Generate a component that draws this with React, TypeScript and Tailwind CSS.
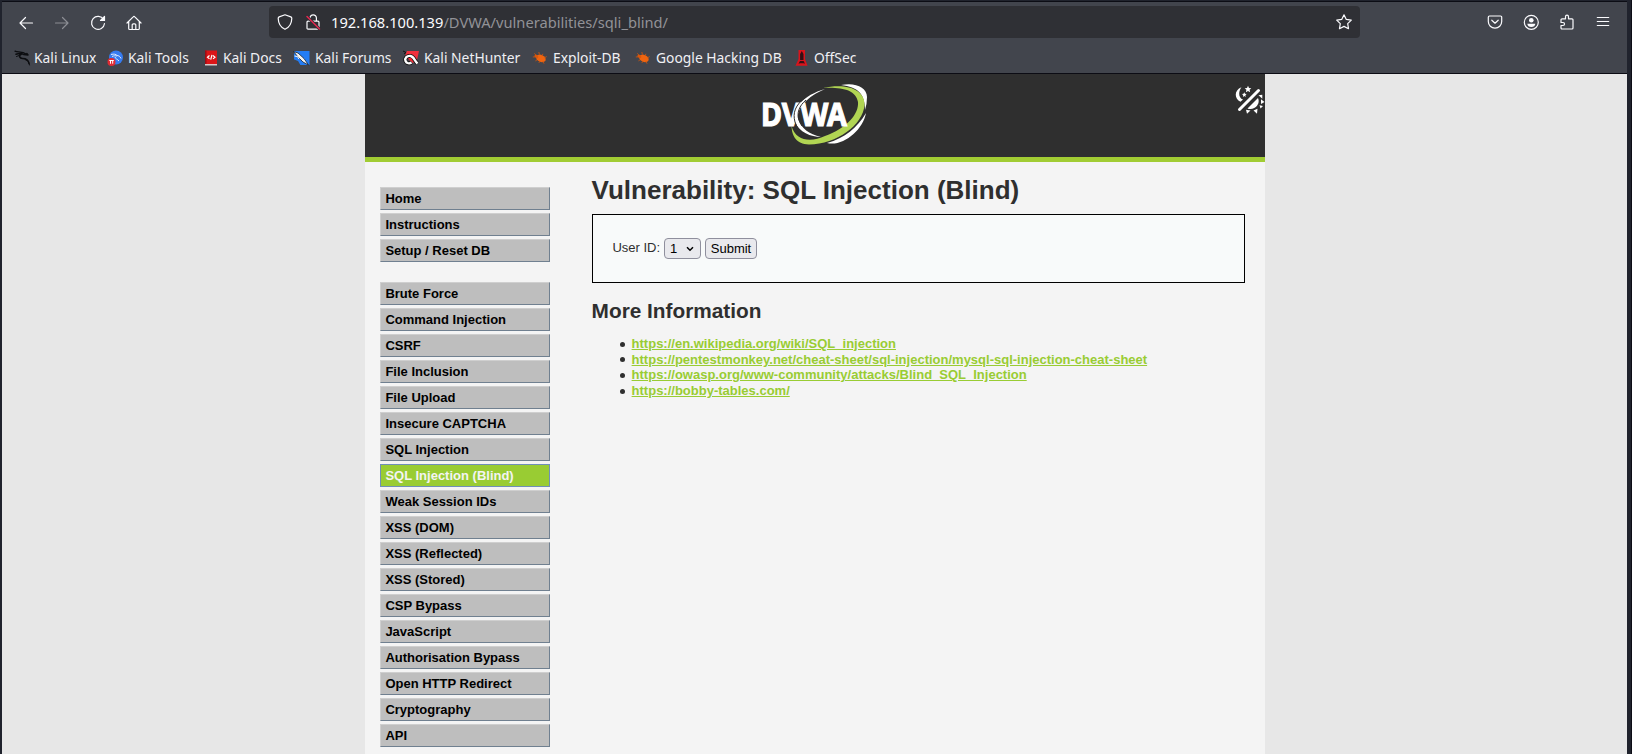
import React from "react";

const topMenu = ["Home", "Instructions", "Setup / Reset DB"];
const mainMenu = [
  "Brute Force", "Command Injection", "CSRF", "File Inclusion", "File Upload",
  "Insecure CAPTCHA", "SQL Injection", "SQL Injection (Blind)", "Weak Session IDs",
  "XSS (DOM)", "XSS (Reflected)", "XSS (Stored)", "CSP Bypass", "JavaScript",
  "Authorisation Bypass", "Open HTTP Redirect", "Cryptography", "API",
];
const links = [
  "https://en.wikipedia.org/wiki/SQL_injection",
  "https://pentestmonkey.net/cheat-sheet/sql-injection/mysql-sql-injection-cheat-sheet",
  "https://owasp.org/www-community/attacks/Blind_SQL_Injection",
  "https://bobby-tables.com/",
];

type P = { children: React.ReactNode; className?: string };
const Icon = ({ children, className = "" }: P) => (
  <svg width="16" height="16" viewBox="0 0 16 16" fill="none" stroke="#fbfbfe" strokeWidth="1.2" strokeLinecap="round" strokeLinejoin="round" className={"shrink-0 " + className}>
    {children}
  </svg>
);

const Bug = () => (
  <svg width="16" height="16" viewBox="0 0 16 16" className="shrink-0">
    <g transform="rotate(24 8 8)">
      <ellipse cx="9" cy="8" rx="5" ry="3.5" fill="#ee6410" />
      <ellipse cx="4" cy="8" rx="2" ry="1.6" fill="#d9570c" />
      <path d="M3 7 1 6M3 9 1 10M6 5 4.5 3M9 5V3M12 6 13.500 4M6 11 5 12.500M9 11v2M12 10l2 1.500" stroke="#c9540f" strokeWidth=".8" />
    </g>
  </svg>
);

const bookmarks: { label: string; width: string; icon: React.ReactNode }[] = [
  {
    label: "Kali Linux", width: "w-[94px]", icon: (
      <svg width="16" height="16" viewBox="0 0 16 16" className="shrink-0 overflow-visible" fill="none" stroke="#0c0d10" strokeLinecap="round" strokeLinejoin="round">
        <g transform="translate(1 0)">
          <path d="M1 1.200C4 2.500 8 1 12.500 4.200" strokeWidth="1.300" />
          <path d="M2 4.300C5 3.300 8 3.500 9.500 4.500L14 5l-1.200-1.500M7 4.500C4.500 5.500 5.500 8.500 8.500 8.500c4 0 6 1.500 6.500 5" strokeWidth="1.500" />
          <path d="M2.500 6.500 5 5.500M11 9.500l3.500 2 1 3.500" strokeWidth="1" />
        </g>
      </svg>
    ),
  },
  {
    label: "Kali Tools", width: "w-[95px]", icon: (
      <svg width="16" height="16" viewBox="0 0 16 16" className="shrink-0 overflow-visible">
        <circle cx="9" cy="7.500" r="7" fill="#367bf0" />
        <path d="M4 4.500c3-.8 5-.3 6 1 1.500.1 3 .6 4 3M5 6.500c2-.9 3.500-.9 5-.5M8 7c.3 2 2.500 2 4 4" stroke="#dce8ff" strokeWidth="1" fill="none" />
        <circle cx="4.500" cy="12" r="4" fill="#e02b33" />
        <path d="M2.300 10.500h4.500M3.500 10.700v3M5.700 10.700v3" stroke="#fff" strokeWidth="1" />
      </svg>
    ),
  },
  {
    label: "Kali Docs", width: "w-[92px]", icon: (
      <svg width="16" height="16" viewBox="0 0 16 16" className="shrink-0">
        <path d="M3 .5h12v13.500h-12z" fill="#dc1518" /><path d="M3 .5h1.500v13.500h-1.500z" fill="#9c0d15" />
        <path d="M3 14h12v1.500h-12z" fill="#d9c7c8" />
        <path d="M7.500 5.500 5.500 7.200 7.500 8.900M11 5.500l2 1.700-2 1.700M10 4.800l-1.300 4.800" stroke="#fff" strokeWidth="1.200" fill="none" />
      </svg>
    ),
  },
  {
    label: "Kali Forums", width: "w-[109px]", icon: (
      <svg width="17" height="16" viewBox="0 0 17 16" className="-ml-px shrink-0">
        <path d="M1 1h15.500v14H1Z" fill="#247df4" />
        <path d="M0 9 5 11 8 16H0Z" fill="#42454d" />
        <path d="M.5 1.500 5 3 11 8.500 15.500 15 10 12 5 7Z" fill="#f5f5f5" stroke="#17202c" strokeWidth=".8" />
        <path d="m1.500 6 3 .5 1.500 2.500" stroke="#fff" fill="none" />
      </svg>
    ),
  },
  {
    label: "Kali NetHunter", width: "w-[129px]", icon: (
      <svg width="16" height="16" viewBox="0 0 16 16" className="shrink-0">
        <path d="M4 1h12l-2 9-4 3L2 6Z" fill="#f0303c" />
        <path d="m0 1 3 1.500L1 4" fill="none" stroke="#111" />
        <path d="M14.500 13.500C11.500 11 11 6.500 7.500 6 4 5.500 1.500 8 2.500 11c1 2.500 4 3 6 1.500" fill="none" stroke="#111" strokeWidth="4" />
        <path d="M14.500 13.500C11.500 11 11 6.500 7.500 6 4 5.500 1.500 8 2.500 11c1 2.500 4 3 6 1.500" fill="none" stroke="#fff" strokeWidth="2.300" />
        <path d="M6.500 10 9 9" stroke="#e22" strokeWidth="1.500" />
      </svg>
    ),
  },
  { label: "Exploit-DB", width: "w-[103px]", icon: <Bug /> },
  { label: "Google Hacking DB", width: "w-[158px]", icon: <Bug /> },
  {
    label: "OffSec", width: "w-[80px]", icon: (
      <svg width="16" height="16" viewBox="0 0 16 16" className="shrink-0">
        <path d="M5.500 0h6.500v9l2.500 6.800h-12L5.500 9Z" fill="#d8141c" />
        <path d="M8.800 1 10.500 4v6H7.100V4ZM7 11h3.600l1.400 2.700-1.500-.5H7.100l-1.600.5Z" fill="#321015" />
      </svg>
    ),
  },
];

const MenuItem = ({ label }: { label: string }) => {
  const active = label === "SQL Injection (Blind)";
  return (
    <li className={"flex h-[23px] items-center border pl-[4.4px] text-[13px] font-bold leading-[15px] " + (active ? "border-[#708fb8] bg-[#99cc33] text-[#f4f4f4]" : "border-t-[#cfcfcf] border-l-[#cfcfcf] border-r-[#708090] border-b-[#708090] bg-[#bebebe] text-black")}>
      {label}
    </li>
  );
};

export default function App() {
  return (
    <div className="flex h-[754px] w-[1632px] flex-col overflow-hidden border-r border-[#0c0d15] bg-[#20232d] pr-1 pl-0.5 font-['Noto_Sans',sans-serif]">
      <div className="h-0.5 shrink-0 border-b border-[#0c0d15]" />
      <header className="flex h-[72px] shrink-0 flex-col border-b border-[#0c0c14] bg-[#42454d]">
        <div className="flex h-10 items-center">
          <div className="ml-4 flex gap-5 pt-px">
            <Icon><path d="M14.500 8H2M7.500 2.500 2 8l5.500 5.500" /></Icon>
            <Icon className="opacity-40"><path d="M1.500 8H14M8.500 2.500 14 8l-5.500 5.500" /></Icon>
            <Icon><path d="M13.600 4.500A6.500 6.500 0 1 0 14.500 8.500" /><path d="M14.500 1.500V5.500H10.500Z" fill="#fbfbfe" /></Icon>
            <Icon><path d="M1 8 7.200 1.800a1.100 1.100 0 0 1 1.600 0L15 8M2.700 6.500V13.500a1 1 0 0 0 1 1h8.600a1 1 0 0 0 1-1V6.500M6.200 14.500V10a1.200 1.200 0 0 1 1.200-1.200h1.200A1.200 1.200 0 0 1 9.800 10v4.500" /></Icon>
          </div>
          <div className="ml-[127px] flex h-8 w-[1091px] items-center rounded bg-[#2f3035] pr-2 pl-2">
            <Icon><path d="M8 .8 13.800 2.900Q14.800 3.300 14.800 4.500C14.600 10 12.500 13.300 8 15.300 3.500 13.300 1.400 10 1.200 4.500Q1.200 3.300 2.200 2.900Z" /></Icon>
            <Icon className="ml-3">
              <path d="M5 7.200V4a3.200 3.200 0 0 1 6.400 0V7.200M3 7.200h10a1 1 0 0 1 1 1v6a1 1 0 0 1-1 1H3a1 1 0 0 1-1-1V8.200a1 1 0 0 1 1-1Z" />
              <path d="M2 2.500 14.500 15" stroke="#2f3035" strokeWidth="3" />
              <path d="M2 2.500 14.500 15" stroke="#e22850" strokeWidth="1.500" />
            </Icon>
            <div className="ml-[10px] flex-1 text-[14.667px] leading-5 text-[#fbfbfe]">192.168.100.139<span className="text-[#929297]">/DVWA/vulnerabilities/sqli_blind/</span></div>
            <Icon><path d="M8 .8 10.300 5.400 15.300 6.100 11.700 9.700 12.500 14.700 8 12.400 3.500 14.700 4.300 9.700.7 6.100 5.700 5.400Z" /></Icon>
          </div>
          <div className="ml-[127px] flex gap-5">
            <Icon><path d="M2.500 2h11a1.200 1.200 0 0 1 1.200 1.200V7.500A6.700 6.700 0 0 1 1.300 7.500V3.200A1.200 1.200 0 0 1 2.500 2ZM4.800 6.200 8 9.200l3.200-3" /></Icon>
            <Icon><circle cx="8.300" cy="8.300" r="7" /><circle cx="8.300" cy="6.200" r="2.300" fill="#fbfbfe" stroke="none" /><path d="M4.300 9.800h8c0 2-1.800 3.300-4 3.300S4.300 11.800 4.300 9.800Z" fill="#fbfbfe" stroke="none" /></Icon>
            <Icon><path d="M2 8.500V5.800a1 1 0 0 1 1-1H6.500V2.700a1.500 1.500 0 0 1 3 0V4.800H13a1 1 0 0 1 1 1V14a1 1 0 0 1-1 1H3a1 1 0 0 1-1-1V11.500H4a1.500 1.500 0 0 0 0-3Z" /></Icon>
            <Icon><path d="M2.300 3.500h11.400M2.300 7.500h11.400M2.300 11.500h11.400" /></Icon>
          </div>
        </div>
        <div className="flex h-[31px] items-center pl-[11px] text-[13.850px] leading-5 text-[#f0f0f4]">
          {bookmarks.map((b) => (
            <div key={b.label} className={"flex shrink-0 items-center gap-[5px] whitespace-nowrap " + b.width}>
              {b.icon}<span>{b.label}</span>
            </div>
          ))}
        </div>
      </header>

      <main className="flex flex-1 overflow-hidden bg-[#e7e7e7] pl-[363px] font-['Liberation_Sans',sans-serif] text-[13px] text-[#2f2f2f]">
        <div className="flex w-[900px] flex-col bg-[#f4f4f4]">
          <div className="flex h-[88px] shrink-0 border-b-[5px] border-[#a1cc33] bg-[#2f2f2f]">
            <svg width="112" height="68" viewBox="0 0 112 68" className="mt-2 ml-[393px]">
              <path d="M83 3C97 0 109 5 109 15Q109 22 107 28C107 12 100 5 83 3Z" fill="#fff" />
              <path d="M108 31C105 48 85 65 69 61C87 56 99 46 108 31Z" fill="#fff" />
              <path d="M65 6C88 1 107 7 106.500 23C105 43 79 62 51 62.500C38 62 34 54 33.500 44C38 60 54 60 67 54C89 46 101 32 100 20C98 8 84 5 65 6Z" fill="#b1d553" />
              <path d="M67 7C46 13 32 27 37 40C41 50 53 55 63 55C51 52 43 46 40.500 38C37 27 50 14 67 7Z" fill="#fff" />
              <text x="3" y="43.500" textLength="86" lengthAdjust="spacingAndGlyphs" fill="#fff" stroke="#fff" strokeWidth="1.200" className="font-['Noto_Sans'] text-[33px] font-bold">DVWA</text>
              <path d="M48 15C37 23 34.500 31 37 40L40 47" fill="none" stroke="#2f2f2f" strokeWidth="1" />
              <path d="M48 18C41 24 38.500 31 41 38L44 44" fill="none" stroke="#2f2f2f" strokeWidth="1" />
            </svg>
            <svg width="30" height="30" viewBox="0 0 30 30" className="mt-[11px] ml-auto">
              <g fill="#fff">
                <path d="M6.500 2.300C-1 5-1 14 5.500 16.800L8 14.500C3.500 13 3 7 6.500 2.300Z" />
                <path d="m13 .8 1 2.100 2.300.3-1.700 1.600.5 2.500L13 6.100 10.900 7.300l.5-2.500L9.700 3.200l2.300-.3ZM9.300 7.300l.7 1.500 1.600.2-1.200 1.200.3 1.700-1.400-.9-1.400.9.3-1.700-1.200-1.200 1.600-.2Z" />
                <path d="M12.500 23.500 23 13C26 19 19 26 12.500 23.500Z" />
                <path d="m23.500 10.300 3.800-.5v3.900ZM26 14.300l3.500 2.700-3.500 2ZM24.500 20.300l3.500.7-2.500 2.500ZM18.500 25.500l4-1.700-.500 4.900ZM11 24.800l4.500.7-3.500 3.200Z" />
              </g>
              <path d="M4.500 24.500 23.500 5.500" stroke="#2f2f2f" strokeWidth="4.400" />
              <path d="M4.500 24.500 23.500 5.500" stroke="#fff" strokeWidth="3" strokeLinecap="round" />
            </svg>
          </div>
          <div className="flex flex-1">
            <nav className="ml-[15px] w-[170px] pt-[25px]">
              <ul className="flex flex-col gap-[3px]">{topMenu.map((m) => <MenuItem key={m} label={m} />)}</ul>
              <ul className="mt-5 flex flex-col gap-[3px]">{mainMenu.map((m) => <MenuItem key={m} label={m} />)}</ul>
            </nav>
            <section className="ml-[42px] w-[653px] pt-[13px]">
              <h1 className="-ml-[0.4px] text-[26px] font-bold leading-[30px]">Vulnerability: SQL Injection (Blind)</h1>
              <div className="mt-[9px] flex h-[69px] items-start border border-black bg-[#f8fafa] pt-[23px] pl-[19px]">
                <span className="mt-[2px] ml-[0.4px] w-[48px] leading-[15px]">User ID:</span>
                <div className="ml-[3.600px] flex h-[21px] w-[37px] items-center rounded-[4px] border border-[#8f8f9d] bg-[#e9e9ed] pl-[5px] text-black">
                  <span>1</span>
                  <svg width="8" height="6" viewBox="0 0 8 6" className="ml-[9px]"><path d="m1 1.200 3 3 3-3" fill="none" stroke="#000" strokeWidth="1.500" /></svg>
                </div>
                <button className="ml-1 h-[21px] w-[52px] rounded-[4px] border border-[#8f8f9d] bg-[#e9e9ed] leading-[19px] text-black">Submit</button>
              </div>
              <h2 className="-ml-[0.4px] mt-4 text-[20.800px] font-bold leading-6">More Information</h2>
              <ul className="mt-[13px] pl-[27.600px] leading-[15.6px]">
                {links.map((l) => (
                  <li key={l} className="flex items-center">
                    <span className="mt-px mr-[7px] size-[5px] rounded-full bg-[#2f2f2f]" />
                    <a className="font-bold text-[#99cc33] underline">{l}</a>
                  </li>
                ))}
              </ul>
            </section>
          </div>
        </div>
      </main>
    </div>
  );
}
